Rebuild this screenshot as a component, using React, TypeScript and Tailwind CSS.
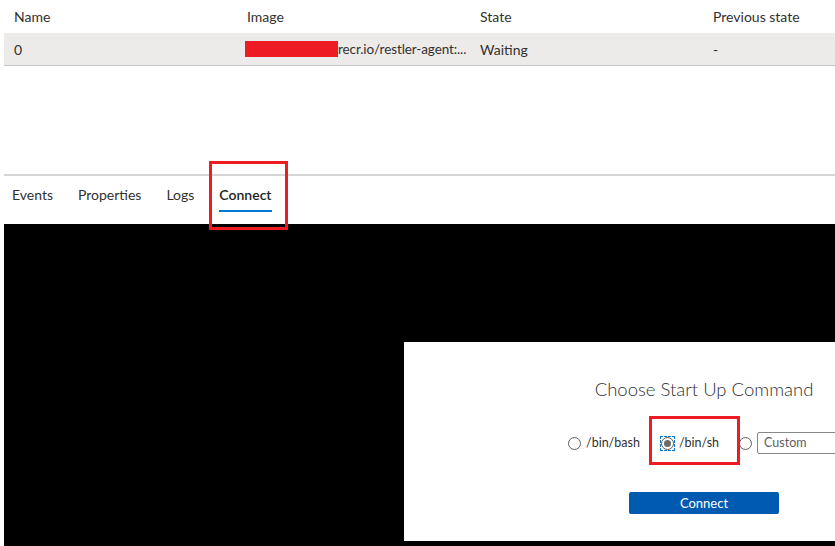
import React from "react";

const columns = ["Name", "Image", "State", "Previous state"];

export default function App() {
  return (
    <div className="relative w-[835px] h-[546px] overflow-hidden bg-white text-[#323130] font-['Lato',sans-serif]">
      {/* Containers table */}
      <div className="pl-1">
        <div className="grid grid-cols-[233px_233px_233px_1fr] h-[33px] items-center text-[14px]">
          {columns.map((c) => (
            <div key={c} className="pl-[10px]">
              {c}
            </div>
          ))}
        </div>
        <div className="grid grid-cols-[233px_233px_233px_1fr] h-[33px] items-center text-[14px] bg-[#edebe9] border-b border-[#c8c6c4] whitespace-nowrap">
          <div className="pl-[10px]">0</div>
          <div className="pl-2 flex items-center">
            <span className="inline-block shrink-0 w-[93px] h-[16px] bg-[#ed1c24]" />
            <span className="text-[13.5px] tracking-[-0.1px]">recr.io/restler-agent:...</span>
          </div>
          <div className="pl-[10px]">Waiting</div>
          <div className="pl-[10px]">-</div>
        </div>
      </div>

      {/* Tabs */}
      <div className="mt-[108px] ml-1 border-t-2 border-[#d6d6d6] h-[50px] flex items-start pt-[8px] pl-2 gap-[25px] text-[14px]">
        <div className="h-[24px] leading-[22px]">Events</div>
        <div className="h-[24px] leading-[22px]">Properties</div>
        <div className="h-[24px] leading-[22px]">Logs</div>
        <div className="h-[28px] leading-[22px] font-semibold border-b-2 border-[#0078d4] text-[#201f1e]">Connect</div>
      </div>

      {/* Console */}
      <div className="ml-1 h-[322px] bg-black overflow-hidden pt-[118px] pl-[400px]">
        <div className="w-[600px] h-[199px] bg-white flex flex-col items-center pt-[34px]">
          <div className="text-[18.5px] font-light text-[#323130] leading-[26px]">Choose Start Up Command</div>
          <div className="self-start pl-[164px] mt-[30px] flex items-center text-[12.5px] text-[#323130]">
            <span className="w-[13px] h-[13px] rounded-full border border-[#605e5c]" />
            <span className="ml-[5px]">/bin/bash</span>
            <span className="ml-[20px] w-[15px] h-[15px] border border-dashed border-[#0078d4] flex items-center justify-center">
              <span className="w-[13px] h-[13px] rounded-full border border-[#605e5c] flex items-center justify-center">
                <span className="w-[7px] h-[7px] rounded-full bg-[#6b6b6b]" />
              </span>
            </span>
            <span className="ml-[4px]">/bin/sh</span>
            <span className="ml-[20px] w-[13px] h-[13px] rounded-full border border-[#605e5c]" />
            <span className="ml-[5px] w-[140px] h-[22px] border border-[#8a8886] rounded-[2px] pl-[6px] leading-[20px] text-[#605e5c]">
              Custom
            </span>
          </div>
          <button className="mt-[38px] w-[150px] h-[22px] rounded-[2px] bg-[#005bb0] text-white text-[13px] leading-[22px]">
            Connect
          </button>
        </div>
      </div>

      {/* Annotation boxes */}
      <div className="absolute left-[209px] top-[161px] w-[79px] h-[69px] border-[3px] border-[#ed1c24]" />
      <div className="absolute left-[649px] top-[416px] w-[91px] h-[49px] border-[3px] border-[#ed1c24]" />
    </div>
  );
}
